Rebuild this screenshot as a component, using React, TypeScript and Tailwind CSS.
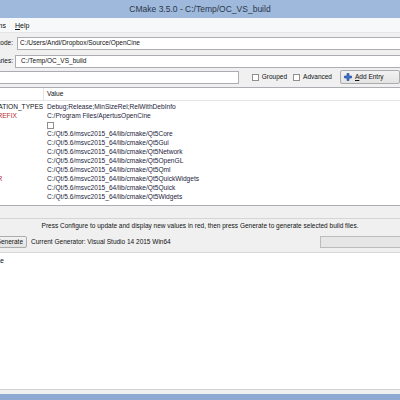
import React from 'react';

// Clips text from the left, so only its end shows (the window is cut off on the left).
const Clip: React.FC<{ className?: string; children: React.ReactNode }> = ({ className = '', children }) => (
    <div className={`flex justify-end overflow-hidden whitespace-nowrap shrink-0 ${className}`}>
        <span className="shrink-0">{children}</span>
    </div>
);

const CheckBox = () => <div className="w-[7px] h-[7px] shrink-0 bg-white border border-[#8e8f8f]" />;

const entries = [
    { name: 'CMAKE_CONFIGURATION_TYPES', value: 'Debug;Release;MinSizeRel;RelWithDebInfo', red: false },
    { name: 'CMAKE_INSTALL_PREFIX', value: 'C:/Program Files/ApertusOpenCine', red: true },
    { name: 'OC_BUILD_TESTS', value: '', bool: true, red: true },
    { name: 'Qt5Core_DIR', value: 'C:/Qt/5.6/msvc2015_64/lib/cmake/Qt5Core', red: true },
    { name: 'Qt5Gui_DIR', value: 'C:/Qt/5.6/msvc2015_64/lib/cmake/Qt5Gui', red: true },
    { name: 'Qt5Network_DIR', value: 'C:/Qt/5.6/msvc2015_64/lib/cmake/Qt5Network', red: true },
    { name: 'Qt5OpenGL_DIR', value: 'C:/Qt/5.6/msvc2015_64/lib/cmake/Qt5OpenGL', red: true },
    { name: 'Qt5Qml_DIR', value: 'C:/Qt/5.6/msvc2015_64/lib/cmake/Qt5Qml', red: true },
    { name: 'Qt5QuickWidgets_DIR', value: 'C:/Qt/5.6/msvc2015_64/lib/cmake/Qt5QuickWidgets', red: true },
    { name: 'Qt5Quick_DIR', value: 'C:/Qt/5.6/msvc2015_64/lib/cmake/Qt5Quick', red: true },
    { name: 'Qt5Widgets_DIR', value: 'C:/Qt/5.6/msvc2015_64/lib/cmake/Qt5Widgets', red: true },
];

const PlusIcon = () => (
    <svg width="8" height="8" viewBox="0 0 8 8" className="shrink-0">
        <path d="M3 0.5h2v2.5h2.5v2h-2.5v2.5h-2v-2.5h-2.5v-2h2.5z" fill="#3d73d6" stroke="#1c3f8c" strokeWidth="0.6" />
    </svg>
);

export default function App() {
    return (
        <div className="w-[400px] h-[400px] overflow-hidden flex flex-col bg-[#f0f0f0] text-[6.5px] leading-none text-[#111] font-['Liberation_Sans',Arial,sans-serif]">
            {/* title bar */}
            <div className="h-[18px] shrink-0 bg-[#9fb9dc] flex items-center justify-center text-[8.5px] text-[#2b3748]">
                CMake 3.5.0 - C:/Temp/OC_VS_build
            </div>

            {/* menu bar */}
            <div className="h-[15px] shrink-0 bg-[#f7f8fa] border-b border-[#e3e5e9] flex items-center text-[7px]">
                <Clip className="w-[6px]">Options</Clip>
                <span className="ml-[9px]"><span className="underline">H</span>elp</span>
            </div>

            {/* source dir */}
            <div className="mt-[4px] h-[13px] shrink-0 flex items-center">
                <Clip className="w-[13px]">Where is the source code:</Clip>
                <div className="ml-[4px] -mr-[2px] flex-1 h-full bg-white border border-[#abadb3] flex items-center pl-[2px]">
                    C:/Users/Andi/Dropbox/Source/OpenCine
                </div>
            </div>

            {/* build dir */}
            <div className="mt-[5px] h-[13px] shrink-0 flex items-center">
                <Clip className="w-[13px]">Where to build the binaries:</Clip>
                <div className="ml-[2px] -mr-[2px] flex-1 h-full bg-white border border-[#abadb3] flex items-center pl-[5px]">
                    C:/Temp/OC_VS_build
                </div>
            </div>

            {/* search row */}
            <div className="mt-[2px] h-[14px] shrink-0 flex items-center">
                <div className="-ml-[1px] w-[254px] h-[13px] bg-white border border-[#abadb3]" />
                <div className="ml-[13px]"><CheckBox /></div>
                <span className="ml-[3px]">Grouped</span>
                <div className="ml-[6px]"><CheckBox /></div>
                <span className="ml-[3px]">Advanced</span>
                <div className="ml-[8px] w-[60px] h-[14px] shrink-0 flex items-center gap-[3px] pl-[3px] border border-[#acacac] rounded-[2px] bg-gradient-to-b from-[#f2f2f2] to-[#e3e3e3]">
                    <PlusIcon />
                    <span><span className="underline">A</span>dd Entry</span>
                </div>
            </div>

            {/* cache table */}
            <div className="mt-[3px] -mr-[2px] h-[119px] shrink-0 bg-white border-t border-b border-[#abadb3] flex flex-col text-[6.6px]">
                <div className="h-[13px] shrink-0 flex border-b border-[#e5e5e5]">
                    <div className="w-[44px] border-r border-[#e5e5e5]" />
                    <div className="pl-[3px] flex items-center">Value</div>
                </div>
                <div className="pt-[2px] flex flex-col">
                    {entries.map((e) => (
                        <div key={e.name} className="h-[9px] flex items-center">
                            <div className={`w-[44px] shrink-0 overflow-hidden whitespace-nowrap ${e.red ? 'text-[#b52a2a]' : 'text-[#111]'}`}>
                                <div className="-ml-[64px]">{e.name}</div>
                            </div>
                            <div className="pl-[3px] whitespace-nowrap text-[#24243c]">
                                {e.bool ? <CheckBox /> : e.value}
                            </div>
                        </div>
                    ))}
                </div>
            </div>

            {/* configure / generate panel */}
            <div className="mt-[12px] shrink-0 border-t border-[#d5d5d5] flex flex-col">
                <div className="h-[15px] flex items-center justify-center">
                    Press Configure to update and display new values in red, then press Generate to generate selected build files.
                </div>
                <div className="mt-[2px] h-[12px] flex items-center">
                    <Clip className="w-[27px] h-full">
                        <span className="w-[50px] h-[12px] flex items-center justify-end pr-[3px] border border-[#acacac] rounded-[2px] bg-gradient-to-b from-[#f2f2f2] to-[#e3e3e3]">
                            Generate
                        </span>
                    </Clip>
                    <span className="ml-[4px]">Current Generator: Visual Studio 14 2015 Win64</span>
                    <div className="ml-auto -mr-[2px] w-[82px] h-[12px] bg-[#e6e6e6] border border-[#bcbcbc]" />
                </div>
                <div className="h-[4px]" />
            </div>

            {/* output */}
            <div className="flex-1 bg-white border-t border-[#d8d8d8] pt-[5px]">
                <Clip className="w-[4px]">Generating done</Clip>
            </div>

            {/* window bottom edge */}
            <div className="h-[5px] shrink-0 bg-[#f0f0f0] border-t border-[#d2d2d2]" />
            <div className="h-[6px] shrink-0 bg-[#8ea9d2]" />
        </div>
    );
}
